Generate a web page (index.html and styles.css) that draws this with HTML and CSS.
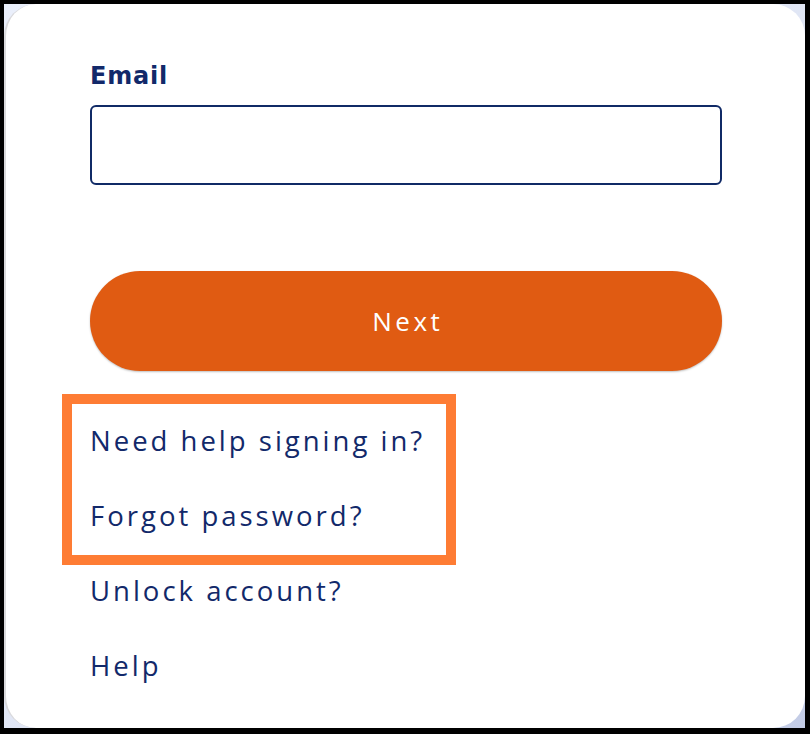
FILE: index.html
```html
<!DOCTYPE html>
<html lang="en">
<head>
<meta charset="utf-8">
<title>Sign in</title>
<link rel="stylesheet" href="styles.css">
</head>
<body>
<div class="frame">
  <div class="screen">
    <form class="card">
      <label class="label" for="email">Email</label>
      <input class="input" id="email" type="email">
      <button class="btn" type="button">Next</button>
      <nav class="links">
        <a class="link" href="#">Need help signing in?</a>
        <a class="link" href="#">Forgot password?</a>
        <a class="link" href="#">Unlock account?</a>
        <a class="link" href="#">Help</a>
      </nav>
      <div class="highlight"></div>
    </form>
  </div>
</div>
</body>
</html>
```

FILE: styles.css
```css
html, body {
  margin: 0;
  padding: 0;
  background: #000;
}
.frame {
  box-sizing: border-box;
  width: 810px;
  height: 734px;
  padding: 4px 5px 6px 4px;
}
.screen {
  height: 100%;
  background: linear-gradient(135deg, #eaeffb 0%, #dfe5f4 60%, #c3cce6 100%);
}
.card {
  position: relative;
  box-sizing: border-box;
  height: 100%;
  margin: 0;
  background: #fff;
  border-left: 2px solid #d9d9dc;
  border-radius: 32px;
  padding: 56px 83px 0 84px;
  display: flex;
  flex-direction: column;
  font-family: "Open Sans", "Liberation Sans", sans-serif;
}
.label {
  font-family: "DejaVu Sans", "Open Sans", sans-serif;
  font-size: 24px;
  font-weight: 700;
  line-height: 32px;
  letter-spacing: 0.8px;
  color: #12296a;
}
.input {
  box-sizing: border-box;
  margin-top: 13px;
  height: 80px;
  width: 100%;
  border: 2px solid #102a66;
  border-radius: 6px;
  background: #fff;
  font-size: 22px;
  padding: 0 16px;
  outline: none;
}
.btn {
  margin-top: 86px;
  height: 100px;
  width: 100%;
  border: none;
  border-radius: 50px;
  background: #e05b12;
  color: #fff;
  font-family: inherit;
  font-size: 26px;
  letter-spacing: 3.5px;
  text-indent: 3.5px;
  box-shadow: 0 1px 2px rgba(0,0,0,0.25);
}
.links {
  margin-top: 32px;
  display: flex;
  flex-direction: column;
  align-items: flex-start;
}
.link {
  font-size: 27.5px;
  line-height: 75px;
  letter-spacing: 3px;
  color: #12296a;
  text-decoration: none;
}
.highlight {
  position: absolute;
  left: 56px;
  top: 390px;
  width: 394px;
  height: 171px;
  box-sizing: border-box;
  border: 10px solid #fe7c34;
  pointer-events: none;
}
```
